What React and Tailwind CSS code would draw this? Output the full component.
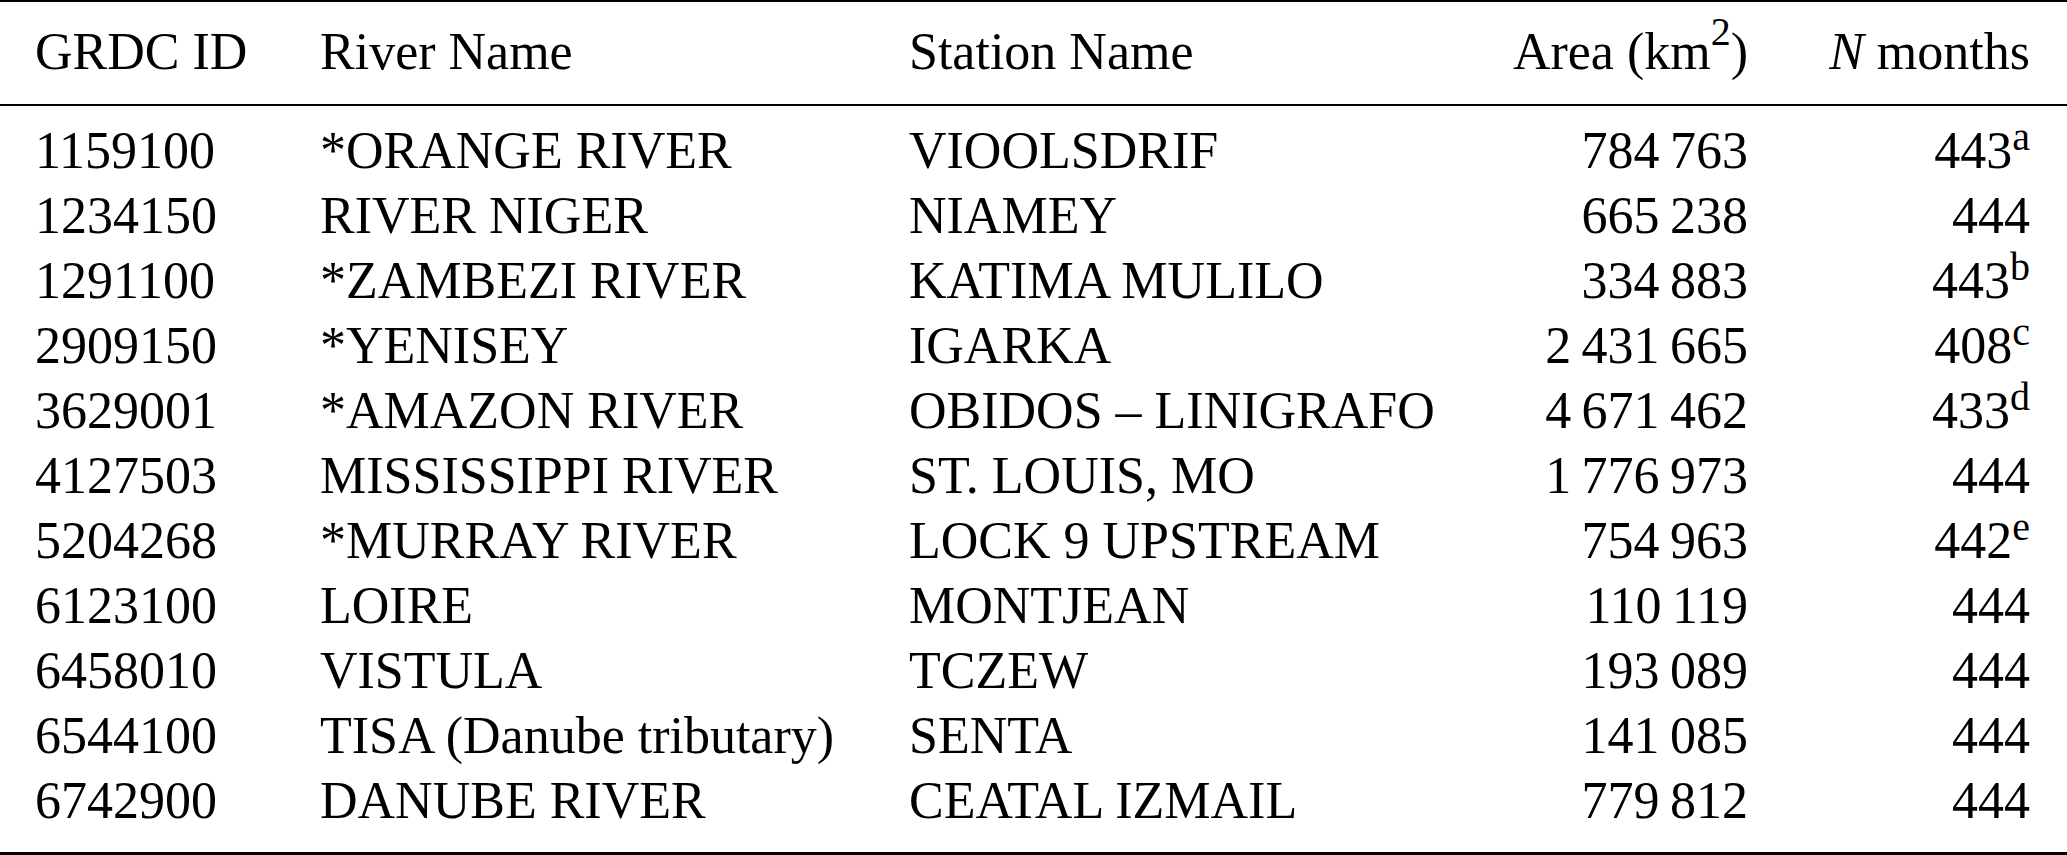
const rows = [
  ["1159100", "*ORANGE RIVER", "VIOOLSDRIF", "784\u2009763", "443", "a"],
  ["1234150", "RIVER NIGER", "NIAMEY", "665\u2009238", "444", null],
  ["1291100", "*ZAMBEZI RIVER", "KATIMA MULILO", "334\u2009883", "443", "b"],
  ["2909150", "*YENISEY", "IGARKA", "2\u2009431\u2009665", "408", "c"],
  ["3629001", "*AMAZON RIVER", "OBIDOS \u2013 LINIGRAFO", "4\u2009671\u2009462", "433", "d"],
  ["4127503", "MISSISSIPPI RIVER", "ST. LOUIS, MO", "1\u2009776\u2009973", "444", null],
  ["5204268", "*MURRAY RIVER", "LOCK 9 UPSTREAM", "754\u2009963", "442", "e"],
  ["6123100", "LOIRE", "MONTJEAN", "110\u2009119", "444", null],
  ["6458010", "VISTULA", "TCZEW", "193\u2009089", "444", null],
  ["6544100", "TISA (Danube tributary)", "SENTA", "141\u2009085", "444", null],
  ["6742900", "DANUBE RIVER", "CEATAL IZMAIL", "779\u2009812", "444", null],
];

const grid = "grid grid-cols-[285px_589px_520px_319px_282px] pl-[35px]";

export default function App() {
  return (
    <div className="w-[2067px] h-[855px] bg-white text-black font-['Liberation_Serif',serif] text-[52px] leading-[65px]">
      <div className="border-t-2 border-black" />
      {/* Header */}
      <div className={`${grid} pt-[17px] pb-[20px] whitespace-nowrap`}>
        <div>GRDC ID</div>
        <div>River Name</div>
        <div>Station Name</div>
        <div className="text-right">
          Area (km<sup className="text-[40px] -top-[24px]">2</sup>)
        </div>
        <div className="text-right">
          <span className="italic">N</span> months
        </div>
      </div>
      <div className="h-[2px] bg-black" />
      {/* Body */}
      <div className="pt-[12px] pb-[19px]">
        {rows.map((r) => (
          <div key={r[0]} className={`${grid} whitespace-nowrap`}>
            <div>{r[0]}</div>
            <div>{r[1]}</div>
            <div>{r[2]}</div>
            <div className="text-right">{r[3]}</div>
            <div className="text-right">
              {r[4]}
              {r[5] && <sup className="text-[40px] -top-[18px]">{r[5]}</sup>}
            </div>
          </div>
        ))}
      </div>
      <div className="h-[3px] bg-black" />
    </div>
  );
}
